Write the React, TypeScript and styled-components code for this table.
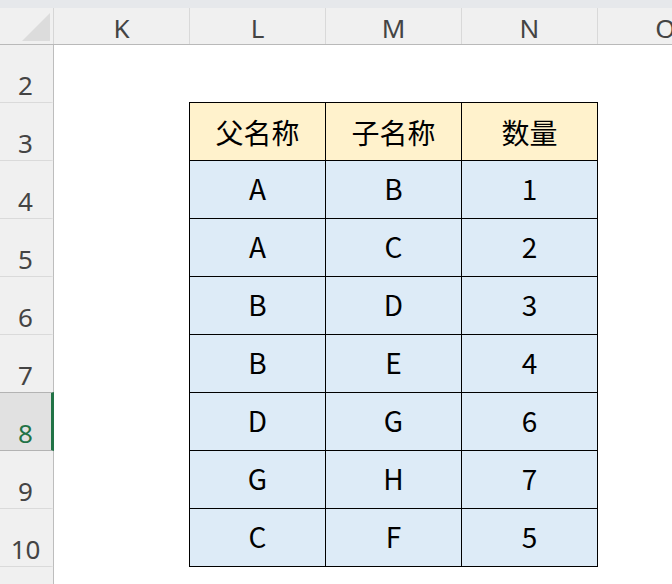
import React from "react";
import styled, { createGlobalStyle } from "styled-components";

const COLUMNS = ["K", "L", "M", "N", "O"];
const ROWS = [2, 3, 4, 5, 6, 7, 8, 9, 10];
const SELECTED_ROW = 8;

const TABLE_HEAD = ["父名称", "子名称", "数量"];
const TABLE_ROWS: string[][] = [
  ["A", "B", "1"],
  ["A", "C", "2"],
  ["B", "D", "3"],
  ["B", "E", "4"],
  ["D", "G", "6"],
  ["G", "H", "7"],
  ["C", "F", "5"],
];

const GlobalStyle = createGlobalStyle`
  * {
    box-sizing: border-box;
  }
  html, body {
    margin: 0;
    padding: 0;
    background: #ffffff;
    overflow: hidden;
  }
`;

const App = () => {
  return (
    <>
      <GlobalStyle />
      <Sheet>
        <TopStrip />
        <ColumnBar>
          <Corner>
            <svg width="53" height="36" viewBox="0 0 53 36">
              <polygon points="22,33 50,33 50,5" fill="#dcdcdc" />
            </svg>
          </Corner>
          {COLUMNS.map((col) => (
            <ColumnHead key={col}>{col}</ColumnHead>
          ))}
        </ColumnBar>
        <Body>
          <RowBar>
            {ROWS.map((row) => (
              <RowHead key={row} selected={row === SELECTED_ROW}>
                {row}
              </RowHead>
            ))}
          </RowBar>
          <Cells>
            <Table>
              {TABLE_HEAD.map((text) => (
                <HeadCell key={text}>{text}</HeadCell>
              ))}
              {TABLE_ROWS.map((row, i) =>
                row.map((text, j) => <Cell key={`${i}-${j}`}>{text}</Cell>)
              )}
            </Table>
          </Cells>
        </Body>
      </Sheet>
    </>
  );
};

const Sheet = styled.div`
  width: 672px;
  height: 584px;
  overflow: hidden;
  display: flex;
  flex-direction: column;
  background: #ffffff;
`;

const TopStrip = styled.div`
  height: 8px;
  flex-shrink: 0;
  background: #e6e8eb;
`;

const ColumnBar = styled.div`
  display: flex;
  flex-shrink: 0;
  height: 37px;
  background: #f0f0f0;
  border-bottom: 1px solid #b9b9b9;
`;

const Corner = styled.div`
  width: 54px;
  flex-shrink: 0;
  border-right: 1px solid #d6d6d6;
  display: flex;
`;

const ColumnHead = styled.div`
  width: 136px;
  flex-shrink: 0;
  border-right: 1px solid #d9d9d9;
  display: flex;
  align-items: center;
  justify-content: center;
  padding-top: 3px;
  font-family: "Noto Sans", "Open Sans", sans-serif;
  font-size: 26px;
  color: #444444;
`;

const Body = styled.div`
  display: flex;
  flex: 1;
  min-height: 0;
`;

const RowBar = styled.div`
  width: 54px;
  flex-shrink: 0;
  display: flex;
  flex-direction: column;
  background: #f0f0f0;
  border-right: 1px solid #bdbdbd;
`;

const RowHead = styled.div<{ selected?: boolean }>`
  height: ${(p) => (p.selected ? "59px" : "58px")};
  flex-shrink: 0;
  display: flex;
  align-items: center;
  justify-content: center;
  padding-top: 22px;
  font-family: "Noto Sans", "Open Sans", sans-serif;
  font-size: 26px;
  line-height: 26px;
  color: ${(p) => (p.selected ? "#217346" : "#444444")};
  background: ${(p) => (p.selected ? "#e1e1e1" : "transparent")};
  border-bottom: 1px solid ${(p) => (p.selected ? "#b3b3b3" : "#dadada")};
  border-top: ${(p) => (p.selected ? "1px solid #b3b3b3" : "none")};
  margin-top: ${(p) => (p.selected ? "-1px" : "0")};
  margin-right: -1px;
  border-right: 3px solid ${(p) => (p.selected ? "#217346" : "transparent")};
`;

const Cells = styled.div`
  flex: 1;
  padding: 57px 0 0 135px;
`;

const Table = styled.div`
  display: grid;
  grid-template-columns: repeat(3, 136px);
  grid-auto-rows: 58px;
  width: max-content;
  border-left: 1px solid #000000;
  border-top: 1px solid #000000;
`;

const Cell = styled.div`
  display: flex;
  align-items: center;
  justify-content: center;
  padding-bottom: 3px;
  border-right: 1px solid #000000;
  border-bottom: 1px solid #000000;
  background: #ddebf7;
  font-family: "Noto Sans CJK SC", "Noto Sans", sans-serif;
  font-size: 28px;
  color: #000000;
`;

const HeadCell = styled(Cell)`
  background: #fff2cc;
  padding-bottom: 0;
`;

export default App;
